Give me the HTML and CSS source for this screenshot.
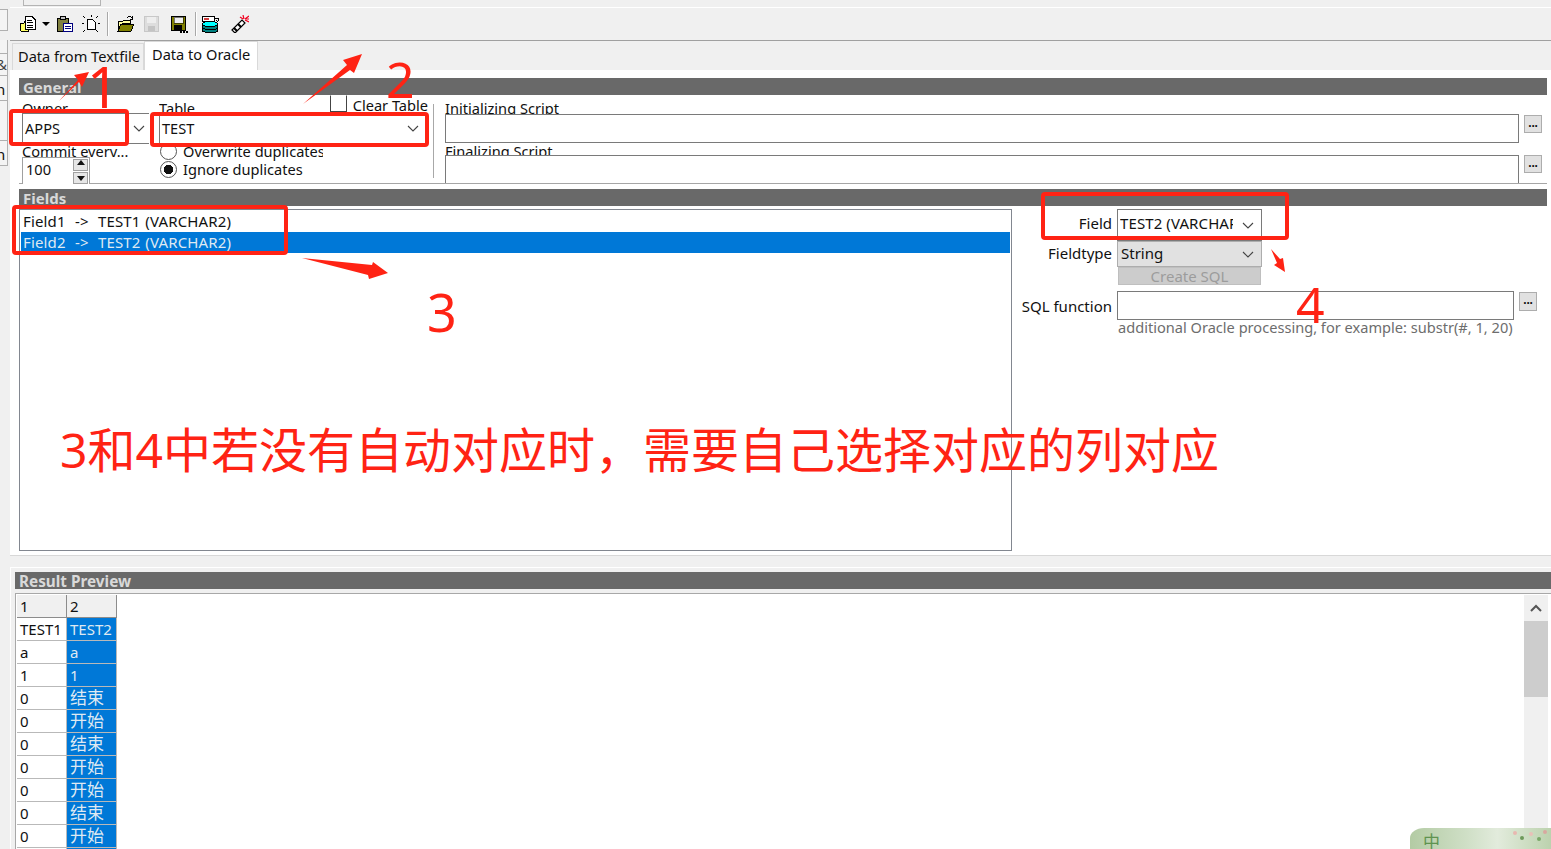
FILE: index.html
```html
<!DOCTYPE html>
<html lang="zh">
<head>
<meta charset="utf-8">
<title>Data to Oracle</title>
<link rel="stylesheet" href="styles.css">
</head>
<body>
<div class="app">
  <aside class="side">
    <div class="side-cell side-a"></div>
    <div class="side-gap"></div>
    <div class="side-cell side-b"></div>
    <div class="side-cell side-c">&amp;</div>
    <div class="side-cell side-d">n</div>
    <div class="side-cell side-e"></div>
    <div class="side-cell side-f">n</div>
  </aside>
  <main class="main">
    <div class="topstrip"><div class="topbtn"></div></div>
    <div class="toolbar">
      <svg class="ic ic1" viewBox="0 0 18 18"><path d="M1 8h4l1-2h3v10H2z" fill="#ffff66" stroke="#000"/><path d="M6 1.500h7l3 3v10H6z" fill="#fff" stroke="#000"/><path d="M8 5h5M8 7.500h6M8 10h6M8 12.500h6" stroke="#000"/></svg>
      <span class="caret"></span>
      <svg class="ic ic2" viewBox="0 0 18 18"><rect x="1.500" y="3.500" width="11" height="13" fill="#808040" stroke="#000"/><rect x="4.500" y="1.500" width="5" height="3" fill="#c0c0c0" stroke="#000"/><rect x="7.500" y="8.500" width="9" height="8" fill="#fff" stroke="#000080"/><path d="M9 11h6M9 13.500h6" stroke="#000080"/></svg>
      <svg class="ic ic3" viewBox="0 0 18 18"><path d="M5.500 4.500h5l3 3v7h-8z" fill="#fff" stroke="#000"/><path d="M9 0v2M1 1l2 2M16 1l-2 2M0 8h2M16 8h2M1 17l2-2M16 17l-2-2" stroke="#000"/></svg>
      <span class="tool-sep"></span>
      <svg class="ic ic4" viewBox="0 0 18 18"><path d="M1 6h5l1-1h6v3H6l-3 8H1z" fill="#ffffa0" stroke="#000"/><path d="M1 16l3-7h13l-3 7z" fill="#808000" stroke="#000"/><path d="M10 3q3-3 5 0M15 1v3h-2" fill="none" stroke="#000"/></svg>
      <svg class="ic ic5" viewBox="0 0 18 18"><path d="M1.500 1.500h14v15h-14z" fill="#ddd" stroke="#c8c8c8"/><rect x="4" y="2" width="9" height="6" fill="#eee"/><rect x="5" y="11" width="7" height="5" fill="#c4c4c4"/></svg>
      <svg class="ic ic6" viewBox="0 0 18 18"><path d="M1.500 1.500h14v14h-14z" fill="#808000" stroke="#000"/><rect x="4" y="2" width="9" height="6" fill="#eee" stroke="#000" stroke-width=".5"/><rect x="4" y="10" width="8" height="6" fill="#000"/><path d="M10 17h2M13 17h2M16 17h2" stroke="#000" stroke-width="2"/></svg>
      <span class="tool-sep"></span>
      <svg class="ic ic7" viewBox="0 0 18 18"><rect x="1.500" y="1.500" width="12" height="5" fill="#fff" stroke="#000"/><rect x="3" y="3" width="5" height="2" fill="#d04040"/><path d="M14 3h3v3M15 5l2 2" fill="none" stroke="#000"/><rect x="1.500" y="12" width="15" height="5" rx="2" fill="#008080" stroke="#000"/><rect x="1.500" y="10" width="15" height="4" rx="2" fill="#008080" stroke="#000"/><ellipse cx="9" cy="9" rx="7.500" ry="2.500" fill="#00ffff" stroke="#000"/></svg>
      <svg class="ic ic8" viewBox="0 0 18 18"><path d="M1 15L11 5l3 3L4 18z" fill="#fff" stroke="#000" stroke-width="1.200"/><path d="M3 13l3 3M7 9l3 3" stroke="#000" stroke-width="2"/><path d="M12 0l1 4M18 1l-4 3M18 7l-4-2M9 2l3 2M15 4h3" stroke="#f00020" stroke-width="1.200"/></svg>
    </div>
    <div class="tabs">
      <div class="tab tab-off">Data from Textfile</div>
      <div class="tab tab-on">Data to Oracle</div>
    </div>
    <section class="panel">
      <h2 class="bar">General</h2>
      <div class="general">
        <div class="col-owner">
          <div class="label label-top">Owner</div>
          <div class="combo combo-owner"><span>APPS</span><svg class="chev" viewBox="0 0 12 7"><path d="M1 1l5 5 5-5" fill="none" stroke="#444" stroke-width="1.100"/></svg></div>
          <div class="label label-commit">Commit every...</div>
          <div class="spin">
            <span>100</span>
            <div class="spin-btns"><i class="spin-up"></i><i class="spin-down"></i></div>
          </div>
        </div>
        <div class="col-table">
          <div class="table-top">
            <div class="label label-top">Table</div>
            <label class="clear"><i class="check"></i>Clear Table</label>
          </div>
          <div class="combo combo-table"><span>TEST</span><svg class="chev" viewBox="0 0 12 7"><path d="M1 1l5 5 5-5" fill="none" stroke="#444" stroke-width="1.100"/></svg></div>
          <div class="radios">
            <div class="radio"><i class="dot"></i>Overwrite duplicates</div>
            <div class="radio"><i class="dot dot-on"></i>Ignore duplicates</div>
          </div>
        </div>
        <div class="vsep"></div>
        <div class="col-script">
          <div class="label label-init">Initializing Script</div>
          <div class="script-row"><div class="script-box"></div><button class="dots">...</button></div>
          <div class="label label-final">Finalizing Script</div>
          <div class="script-row script-row-2"><div class="script-box script-box-2"></div><button class="dots dots-2">...</button></div>
        </div>
      </div>
      <h2 class="bar bar-fields">Fields</h2>
      <div class="fields">
        <div class="list">
          <div class="list-item">Field1&nbsp; -&gt;&nbsp; TEST1 (VARCHAR2)</div>
          <div class="list-item list-sel">Field2&nbsp; -&gt;&nbsp; TEST2 (VARCHAR2)</div>
        </div>
        <div class="detail">
          <div class="frow frow-field">
            <span class="flabel">Field</span>
            <div class="combo combo-field"><span class="clip">TEST2 (VARCHAR2)</span><svg class="chev" viewBox="0 0 12 7"><path d="M1 1l5 5 5-5" fill="none" stroke="#444" stroke-width="1.100"/></svg></div>
          </div>
          <div class="frow frow-type">
            <span class="flabel">Fieldtype</span>
            <div class="combo combo-type"><span>String</span><svg class="chev" viewBox="0 0 12 7"><path d="M1 1l5 5 5-5" fill="none" stroke="#444" stroke-width="1.100"/></svg></div>
          </div>
          <div class="create">Create SQL</div>
          <div class="frow frow-sql">
            <span class="flabel">SQL function</span>
            <div class="sql-box"></div>
            <button class="dots dots-sql">...</button>
          </div>
          <div class="hint">additional Oracle processing, for example: substr(#, 1, 20)</div>
        </div>
      </div>
    </section>
    <section class="result">
      <h2 class="bar bar-result">Result Preview</h2>
      <div class="result-body">
        <div class="grid">
          <div class="gh">1</div><div class="gh">2</div>
          <div class="gc">TEST1</div><div class="gc gs">TEST2</div>
          <div class="gc">a</div><div class="gc gs">a</div>
          <div class="gc">1</div><div class="gc gs">1</div>
          <div class="gc">0</div><div class="gc gs cjk">结束</div>
          <div class="gc">0</div><div class="gc gs cjk">开始</div>
          <div class="gc">0</div><div class="gc gs cjk">结束</div>
          <div class="gc">0</div><div class="gc gs cjk">开始</div>
          <div class="gc">0</div><div class="gc gs cjk">开始</div>
          <div class="gc">0</div><div class="gc gs cjk">结束</div>
          <div class="gc">0</div><div class="gc gs cjk">开始</div>
          <div class="gc">0</div><div class="gc gs"></div>
        </div>
        <div class="scroll">
          <div class="scroll-up"><svg viewBox="0 0 12 8"><path d="M1 7l5-5 5 5" fill="none" stroke="#555" stroke-width="2"/></svg></div>
          <div class="scroll-thumb"></div>
        </div>
      </div>
    </section>
  </main>
</div>

<div class="mark mark-1"></div>
<div class="mark mark-2"></div>
<div class="mark mark-3"></div>
<div class="mark mark-4"></div>
<svg class="arrows" viewBox="0 0 1551 849">
  <polygon points="59,101 78,80 74,75 89,72 82,87 79,82"/>
  <polygon points="303,104 347,65 343,60 362,54 354,73 350,70"/>
  <polygon points="302,258 372,265 373,262 388,273 369,279 368,275"/>
  <polygon points="1271,249 1280,259 1283,258 1285,272 1274,265 1277,263"/>
</svg>
<span class="num num-1">1</span>
<span class="num num-2">2</span>
<span class="num num-3">3</span>
<span class="num num-4">4</span>
<div class="note">3和4中若没有自动对应时，需要自己选择对应的列对应</div>
<div class="ime">
  <span>中</span>
  <svg class="ime-flowers" viewBox="0 0 40 16"><circle cx="6" cy="4" r="2" fill="#e8b8b0"/><circle cx="13" cy="9" r="2" fill="#6d9a5a"/><circle cx="22" cy="5" r="2" fill="#e8c0b8"/><circle cx="30" cy="10" r="2" fill="#7aa868"/><circle cx="36" cy="3" r="2" fill="#d8a8a0"/></svg>
</div>
</body>
</html>
```
FILE: styles.css
```css
* { box-sizing: border-box; }
html, body { margin: 0; padding: 0; }
body {
  width: 1551px;
  height: 849px;
  overflow: hidden;
  position: relative;
  background: #f0f0f0;
  color: #111;
  font: 14.600px/20px "Noto Sans", "Noto Sans CJK SC", sans-serif;
}
.app { display: flex; height: 849px; }

/* left fragment of the parent window */
.side { width: 10px; flex: none; display: flex; flex-direction: column; padding-top: 9px; }
.side-cell { width: 8px; border: 1px solid #b0b0b0; border-left: 0; background: #f4f4f4; font-size: 15px; line-height: 20px; overflow: hidden; text-indent: -4px; }
.side-a { height: 22px; }
.side-gap { height: 9px; }
.side-b { height: 14px; border-top: 0; }
.side-c { height: 22px; color: #444; border-top: 0; }
.side-d { height: 25px; border-top: 0; padding-top: 3px; }
.side-e { height: 40px; border-top: 0; }
.side-f { height: 25px; border-top: 0; padding-top: 3px; }

.main { flex: 1; min-width: 0; display: flex; flex-direction: column; }
.topstrip { height: 8px; border-bottom: 1px solid #fff; padding-left: 13px; }
.topbtn { width: 78px; height: 6px; border: 1px solid #b4b4b4; border-top: 0; background: #f0f0f0; }

.toolbar { height: 33px; flex: none; display: flex; align-items: center; border-bottom: 1px solid #a0a0a0; padding: 0 0 0 9px; background: #f0f0f0; }
.ic { width: 18px; height: 18px; flex: none; display: block; shape-rendering: crispEdges; }
.ic2 { margin-left: 6px; }
.ic3 { margin-left: 8px; }
.ic4 { margin-left: 8px; }
.ic5 { margin-left: 8px; }
.ic6 { margin-left: 9px; }
.ic7 { margin-left: 4px; }
.ic8 { margin-left: 12px; shape-rendering: auto; }
.caret { width: 0; height: 0; margin-left: 5px; border: 4px solid transparent; border-top: 4px solid #000; border-bottom: 0; }
.tool-sep { width: 2px; height: 24px; margin-left: 7px; background: #a8a8a8; border-right: 1px solid #fff; flex: none; }

.tabs { height: 29px; flex: none; display: flex; align-items: flex-end; padding-left: 2px; }
.tab { white-space: nowrap; }
.tab-off { width: 132px; height: 27px; padding: 2px 0 0 5px; border: 1px solid #d9d9d9; border-bottom: 0; background: #f0f0f0; }
.tab-on { width: 114px; height: 29px; padding: 2px 0 0 7px; background: #fff; border: 1px solid #d9d9d9; border-bottom: 0; position: relative; }

.panel { height: 486px; flex: none; background: #fff; padding: 8px 4px 0 9px; border-bottom: 1px solid #d8d8d8; }
.bar { margin: 0; height: 17px; padding-left: 4px; background: #696969; color: #d9d9d9; font-size: 15px; font-weight: 700; line-height: 19px; overflow: hidden; }

.general { height: 89px; display: flex; border-bottom: 1px solid #a6a6a6; }
.label { overflow: hidden; white-space: nowrap; }
.col-owner { width: 131px; padding-left: 3px; flex: none; }
.label-top { height: 18px; padding-top: 3px; line-height: 21px; }
.combo { display: flex; align-items: center; background: #fff; border: 1px solid #7a7a7a; padding-left: 2px; position: relative; }
.chev { width: 12px; height: 7px; flex: none; display: block; }
.combo-owner { width: 127px; height: 31px; border-right: 0; padding-right: 4px; justify-content: space-between; }
.combo-owner span, .combo-table span { padding-bottom: 2px; }
.combo span { white-space: nowrap; }
.label-commit { height: 13px; line-height: 14px; }
.spin { width: 68px; height: 27px; border: 1px solid #a0a0a0; border-bottom: 0; display: flex; justify-content: space-between; padding: 0 0 0 3px; background: #fff; line-height: 22px; }
.spin-btns { width: 16px; display: flex; flex-direction: column; gap: 1px; padding-top: 1px; }
.spin-btns i { display: block; width: 15px; height: 12px; background: #e6e6e6; border: 1px solid #a0a0a0; position: relative; }
.spin-up::after, .spin-down::after { content: ""; position: absolute; left: 3px; width: 0; height: 0; border: 4px solid transparent; }
.spin-up::after { top: 0; border-bottom: 5px solid #111; border-top: 0; }
.spin-down::after { top: 3px; border-top: 5px solid #111; border-bottom: 0; }

.col-table { width: 269px; flex: none; margin-left: 9px; }
.table-top { height: 18px; display: flex; justify-content: space-between; }
.clear { display: flex; height: 18px; line-height: 20px; }
.check { width: 17px; height: 17px; margin-right: 6px; border: 1px solid #444; border-top-color: #fff; background: #fff; display: block; }
.combo-table { height: 31px; padding-right: 8px; justify-content: space-between; }
.radios { width: 164px; overflow: hidden; height: 42px; margin-top: -2px; padding-left: 1px; }
.radio { display: flex; align-items: center; height: 18px; white-space: nowrap; }
.dot { width: 17px; height: 17px; flex: none; margin-right: 6px; border: 1px solid #555; border-radius: 50%; background: #fff; display: block; }
.dot-on { background: radial-gradient(circle, #111 0 4.500px, #fff 5px); }

.vsep { width: 1px; height: 74px; margin: 9px 11px 0 5px; background: #a8a8a8; flex: none; }
.col-script { flex: 1; min-width: 0; }
.label-init { height: 19px; padding-top: 3px; line-height: 21px; }
.label-final { height: 12px; line-height: 16px; }
.script-row { display: flex; align-items: flex-start; }
.script-box { width: 1074px; height: 29px; border: 1px solid #7a7a7a; background: #fff; }
.script-box-2 { height: 28px; border-bottom: 0; }
.dots { width: 18px; height: 18px; padding: 0 0 3px; background: #e1e1e1; border: 1px solid #adadad; color: #111; font: 700 12px/10px "Liberation Sans", sans-serif; letter-spacing: -.2px; cursor: default; }
.script-row .dots { margin: 1px 0 0 5px; }
.script-row .dots-2 { margin-top: 0; }

.bar-fields { margin-top: 5px; }
.fields { display: flex; padding-top: 3px; }
.list { width: 993px; height: 342px; flex: none; border: 1px solid #828790; padding: 2px 1px; background: #fff; }
.list-item { height: 20px; padding-left: 2px; font-size: 15px; letter-spacing: .15px; word-spacing: .6px; line-height: 19px; white-space: nowrap; overflow: hidden; }
.list-sel { height: 21px; line-height: 20px; background: #0078d7; color: #dfe9f2; }
.detail { flex: 1; min-width: 0; }
.frow { display: flex; }
.flabel { width: 100px; margin-right: 5px; font-size: 15px; text-align: right; flex: none; white-space: nowrap; }
.frow-field { height: 32px; align-items: center; }
.frow-field .flabel, .frow-field .clip { padding-bottom: 4px; }
.combo-field { width: 145px; height: 32px; padding-right: 7px; justify-content: space-between; }
.clip { width: 113px; overflow: hidden; display: block; font-size: 15px; letter-spacing: .1px; }
.frow-type { height: 26px; align-items: center; }
.frow-type .flabel, .combo-type span { padding-bottom: 2px; }
.combo-type { width: 145px; height: 26px; padding: 0 7px 0 3px; background: #e1e1e1; border-color: #adadad; justify-content: space-between; font-size: 15px; }
.create { width: 143px; height: 18px; margin-left: 106px; background: #cccccc; border: 1px solid #bfbfbf; color: #9c9c9c; text-align: center; line-height: 17px; overflow: hidden; font-size: 15px; }
.frow-sql { height: 29px; margin-top: 6px; align-items: flex-start; }
.frow-sql .flabel { line-height: 30px; }
.sql-box { width: 397px; height: 29px; border: 1px solid #7a7a7a; background: #fff; flex: none; }
.dots-sql { width: 18px; height: 19px; margin: 1px 0 0 5px; flex: none; }
.hint { margin-left: 106px; color: #6d6d6d; line-height: 15px; white-space: nowrap; }

.result { flex: 1; min-height: 0; margin-top: 11px; border-top: 1px solid #fff; border-left: 1px solid #fff; padding: 4px 0 0 4px; overflow: hidden; }
.bar-result { padding-left: 4px; font-size: 15.300px; }
.result-body { margin-top: 4px; height: 400px; border: 1px solid #a8a8a8; border-right: 0; background: #fff; padding: 1px 3px 0 1px; display: flex; justify-content: space-between; }
.grid { display: grid; grid-template-columns: 50px 50px; grid-auto-rows: 23px; align-content: start; font-size: 15px; }
.gh, .gc { padding-left: 3px; line-height: 22px; border-right: 1px solid #b9b9b9; border-bottom: 1px solid #b9b9b9; overflow: hidden; white-space: nowrap; }
.gh { background: #f0f0f0; border-color: #8c8c8c; }
.gs { background: #0078d7; color: #dfe9f2; }
.cjk { font-size: 17px; }
.scroll { width: 24px; background: #f0f0f0; flex: none; }
.scroll-up { height: 26px; display: flex; align-items: center; justify-content: center; }
.scroll-up svg { width: 12px; height: 8px; display: block; }
.scroll-thumb { height: 76px; background: #cdcdcd; }

/* annotations laid over the screenshot */
.mark { position: absolute; border: 4px solid #ff2314; border-radius: 4px; }
.mark-1 { left: 9px; top: 109px; width: 120px; height: 37px; }
.mark-2 { left: 150px; top: 112px; width: 279px; height: 35px; }
.mark-3 { left: 12px; top: 205px; width: 276px; height: 50px; }
.mark-4 { left: 1041px; top: 192px; width: 248px; height: 48px; }
.arrows { position: absolute; left: 0; top: 0; width: 1551px; height: 849px; pointer-events: none; }
.arrows polygon { fill: #ff2314; }
.num { position: absolute; color: #ff2314; line-height: 1; font-family: "Noto Sans", sans-serif; font-weight: 400; }
.num-1 { left: 87px; top: 58px; font-size: 56px; }
.num-2 { left: 386px; top: 54px; font-size: 50px; }
.num-3 { left: 427px; top: 286px; font-size: 52px; }
.num-4 { left: 1296px; top: 279px; font-size: 50px; }
.note { position: absolute; left: 60px; top: 420px; color: #ff2314; font: 48px/60px "Noto Sans", "Noto Sans CJK SC", sans-serif; white-space: nowrap; }
.ime { position: absolute; left: 1410px; top: 828px; width: 141px; height: 21px; border-top-left-radius: 14px 10px; background: linear-gradient(90deg, #b3cba4 0, #cfdfc6 40%, #e2ebdc 62%, #bcd2ae 100%); color: #5f9350; font-size: 17px; line-height: 22px; padding: 3px 0 0 13px; overflow: hidden; }
.ime-flowers { position: absolute; right: 2px; top: 1px; width: 40px; height: 16px; }
```
